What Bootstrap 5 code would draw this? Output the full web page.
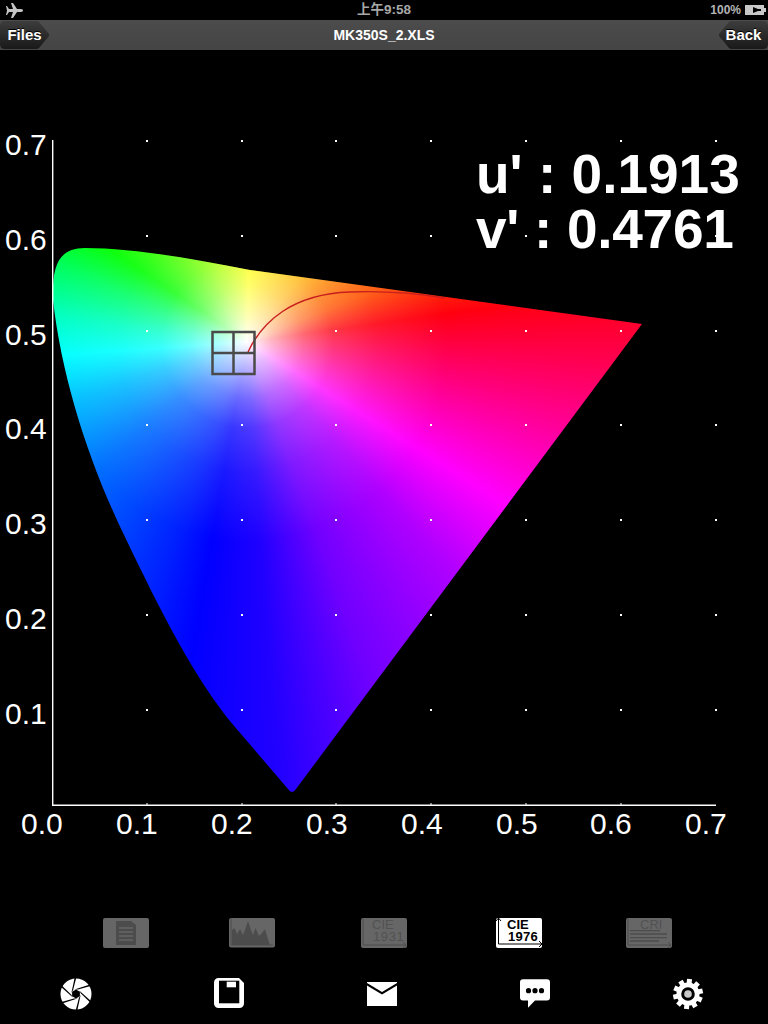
<!DOCTYPE html>
<html lang="zh">
<head>
<meta charset="utf-8">
<title>MK350S_2.XLS</title>
<link href="https://cdn.jsdelivr.net/npm/bootstrap@5.3.0/dist/css/bootstrap.min.css" rel="stylesheet">
<style>
html,body{background:#000;height:100%;margin:0}
body{width:768px;height:1024px;overflow:hidden;font-family:"Liberation Sans",Arial,sans-serif}
.stat-bar{height:20px;padding:0 2px;color:#b4b4b4;font-size:12px}
.stat-side{width:120px}
.plane-side{padding-left:4px}
.stat-time{font-family:"Liberation Sans","Noto Sans CJK SC",sans-serif;font-size:13.5px;font-weight:700;color:#a8a8a8}
.title-bar{height:30px;background:linear-gradient(#4c4c4c,#444);color:#fff;font-weight:700;font-size:14px}
.nav-shape{height:30px;width:49px;font-size:15px;font-weight:700;color:#fff;background:linear-gradient(#3e3e3e,#181818);border:0;padding:0;text-shadow:0 -1px 0 #000}
.nav-left{clip-path:path("M0 6Q0 1 5 1H36Q38 1 39 2L49 14Q50 15 49 16L39 28Q38 29 36 29H5Q0 29 0 24Z")}
.nav-right{clip-path:path("M49 6Q49 1 44 1H13Q11 1 10 2L0 14Q-1 15 0 16L10 28Q11 29 13 29H44Q49 29 49 24Z")}
.chart-area{height:868px;position:relative}
.chromo{position:absolute;left:0;top:-50px;width:768px;height:898px;
 clip-path:path("M53 300 C52 268 57 248 85 248 C130 248 190 258 250 270 L642 324 L296 789 C293 793 291 793 288 789 L235 727 C195 680 160 610 125 537 C90 465 62 380 53 300 Z");
 background:
  radial-gradient(circle 200px at 247px 342px,rgba(255,255,255,1) 0,rgba(255,255,255,.72) 12%,rgba(255,255,255,.42) 28%,rgba(255,255,255,.22) 43%,rgba(255,255,255,.1) 65%,rgba(255,255,255,0) 100%),
  conic-gradient(from 0deg at 247px 342px,#ff0 2deg,#ffb000 40deg,#ff5000 68deg,#ff0010 82deg,#ff0080 101deg,#f0f 122deg,#b000ff 138deg,#7000ff 160deg,#2000ff 176deg,#00f 190deg,#0020ff 200deg,#0070ff 230deg,#00c0ff 252deg,#0ff 266deg,#00ffc0 278deg,#00ff60 292deg,#0f0 304deg,#a0ff00 338deg,#ff0 362deg)}
.chart-svg{position:absolute;left:0;top:-50px;width:768px;height:898px}
.ax-label{font-family:"Liberation Sans",Arial,sans-serif;font-size:30px;fill:#fff}
.uv-label{font-family:"Liberation Sans",Arial,sans-serif;font-size:55px;font-weight:700;fill:#fff}
.mode-row{height:31px;padding-left:103px}
.mode-ic{width:46px;height:31px;display:block}
.gap-a{margin-left:80px}.gap-b{margin-left:86px}.gap-c{margin-left:89px}.gap-d{margin-left:84px}
.act-row{margin-top:29px;height:32px;padding-left:60px}
.act-ic{width:32px;height:32px;display:block}
.act-a,.act-b,.act-c,.act-d{margin-left:121px}
.lbl-gray{font-family:"Liberation Sans",Arial,sans-serif;fill:#525252;font-size:13px}
.lbl-white{font-family:"Liberation Sans",Arial,sans-serif;font-weight:700;fill:#000;font-size:13px}
</style>
</head>
<body>
<div class="stat-bar d-flex align-items-center justify-content-between">
  <div class="stat-side plane-side d-flex align-items-center">
    <svg width="17" height="15" viewBox="0 0 17 15"><path fill="#c4c4c4" d="M1 3 3 6H7L5 0H7L11 6H15C16.500 6 17 7 17 7.500 17 8 16.500 9 15 9H11L7 15H5L7 9H3L1 12H0L1 7.500 0 3Z"/></svg>
  </div>
  <div class="stat-time">上午9:58</div>
  <div class="stat-side d-flex align-items-center justify-content-end gap-1">
    <span class="fw-bold">100%</span>
    <svg width="21" height="10" viewBox="0 0 21 10"><path fill="#c8c8c8" d="M0 0h19v3h2v4h-2v3H0z"/><path fill="#000" d="M8 2 13 4h3v2h-3l-5 2z"/></svg>
  </div>
</div>
<div class="title-bar d-flex align-items-center justify-content-between">
  <button class="nav-shape nav-left">Files</button>
  <div>MK350S_2.XLS</div>
  <button class="nav-shape nav-right">Back</button>
</div>
<div class="chart-area">
  <div class="chromo"></div>
  <svg class="chart-svg" viewBox="0 0 768 898">
    <g fill="#fff">
      <path d="M52 140h1.4v664.6H716v1.4H52z"/>
      <g id="dots"></g>
    </g>
    <path fill="none" stroke="#c81e1e" stroke-width="1.4" d="M248 352 C262 322 292 294 350 292 C385 290.500 420 294 445 298"/>
    <g fill="none" stroke="#4a4a4a" stroke-width="2.500">
      <rect x="212.500" y="332" width="42" height="42"/>
      <path d="M233.500 332v42M212.500 353h42"/>
    </g>
    <g class="ax-label">
      <text x="5" y="155">0.7</text><text x="5" y="250">0.6</text><text x="5" y="345">0.5</text><text x="5" y="439">0.4</text><text x="5" y="534">0.3</text><text x="5" y="629">0.2</text><text x="5" y="724">0.1</text>
      <text x="21" y="834">0.0</text><text x="116" y="834">0.1</text><text x="211" y="834">0.2</text><text x="306" y="834">0.3</text><text x="401" y="834">0.4</text><text x="496" y="834">0.5</text><text x="590" y="834">0.6</text><text x="685" y="834">0.7</text>
    </g>
    <text class="uv-label" x="476" y="193">u' : 0.1913</text>
    <text class="uv-label" x="476" y="248" letter-spacing="-.3">v' : 0.4761</text>
  </svg>
</div>
<div class="mode-row d-flex align-items-start">
  <svg class="mode-ic" viewBox="0 0 46 31"><rect width="46" height="30" rx="2" fill="#666"/><path fill="#4c4c4c" d="M13 3h15l5 4v20H13z"/><path stroke="#666" stroke-width="1.300" d="M16 10h14M16 14h14M16 18h14M16 22h14"/></svg>
  <svg class="mode-ic gap-a" viewBox="0 0 46 31"><rect width="46" height="29.500" rx="2" fill="#666"/><path fill="#4c4c4c" d="M3 12 5.500 10 8 16 11 11 14 17 16 12 19 3 22 12 24 17 26.500 10 30 18 33 15 36 11 38 18 41 27H3z"/><path fill="none" stroke="#4c4c4c" d="M2 0v27h42"/></svg>
  <svg class="mode-ic gap-b" viewBox="0 0 46 31"><rect width="46" height="30" rx="2" fill="#666"/><path fill="none" stroke="#4c4c4c" d="M2 1v26h42M42 24l3 3-3 3"/><text class="lbl-gray" x="11" y="10.500">CIE</text><text class="lbl-gray" x="12" y="22.700" letter-spacing=".6">1931</text></svg>
  <svg class="mode-ic gap-c" viewBox="0 0 46 31"><rect width="46" height="30" rx="2" fill="#fff"/><path fill="none" stroke="#000" stroke-width="1" d="M2.500 0v26H46M0 3l2.500-3L5 3M43 23l3 3-3 3"/><text class="lbl-white" x="11" y="10.500">CIE</text><text class="lbl-white" x="12" y="22.700" letter-spacing=".3">1976</text></svg>
  <svg class="mode-ic gap-d" viewBox="0 0 46 31"><rect width="46" height="30" rx="2" fill="#666"/><path stroke="#4c4c4c" stroke-width="1.300" d="M4 12.700h30M4 16h37M4 19.700h37M4 23h29"/><path fill="none" stroke="#4c4c4c" d="M2 1v26h42M42 24l3 3-3 3"/><text class="lbl-gray" x="14" y="10.500">CRI</text></svg>
</div>
<div class="act-row d-flex align-items-start">
  <svg class="act-ic" viewBox="0 0 32 32"><circle cx="16" cy="16" r="15.500" fill="#fff"/><g id="blades"></g><path d="M16 11.500 19.900 13.750V18.250L16 20.500 12.100 18.250V13.750Z"/></svg>
  <svg class="act-ic act-a" viewBox="0 0 32 32"><path fill="#fff" d="M5.500 0H26L31 5V25.500A4.500 4.500 0 0 1 26.500 30H5.500A4.500 4.500 0 0 1 1 25.500V4.500A4.500 4.500 0 0 1 5.500 0Z"/><path d="M6 2.700H26.300V25.300H6Z"/><rect x="13.700" y="3.700" width="9.300" height="5.600" fill="#fff"/></svg>
  <svg class="act-ic act-b" viewBox="0 0 32 32"><path fill="#fff" d="M1 4v1l15 9 15-9V4zM1 7.500V28h30V7.500L16 16.500z"/></svg>
  <svg class="act-ic act-c" viewBox="0 0 32 32"><path fill="#fff" d="M4 1.300h24a3 3 0 0 1 3 3v15.200a3 3 0 0 1-3 3H16L9 29.700v-7.200H4a3 3 0 0 1-3-3V4.300a3 3 0 0 1 3-3z"/><circle cx="9.500" cy="12.700" r="2.600"/><circle cx="16" cy="12.700" r="2.600"/><circle cx="22.500" cy="12.700" r="2.600"/></svg>
  <svg class="act-ic act-d" viewBox="0 0 32 32"><g fill="#fff"><circle cx="16" cy="16" r="11.500"/><g id="teeth"></g></g><circle cx="16" cy="16" r="5.300" fill="#c8c8c8" stroke="#000" stroke-width="3"/></svg>
</div>
<script src="https://cdn.jsdelivr.net/npm/bootstrap@5.3.0/dist/js/bootstrap.bundle.min.js"></script>
<script>
let s='';
for(const x of [147,242,336,431,526,621,716])for(const y of [141,236,331,425,520,615,710])s+=`<rect x="${x-1}" y="${y-1}" width="2" height="2"/>`;
for(const x of [147,242,336,431,526,621])s+=`<rect x="${x-.5}" y="803" width="1" height="3"/>`;
document.getElementById('dots').innerHTML=s;
let b='',t='';
for(let i=0;i<6;i++)b+=`<path d="M14.500 11.500 18 11.500 30.500 8 30 6.500Z" transform="rotate(${i*60} 16 16)"/>`;
document.getElementById('blades').innerHTML=b;
for(let i=0;i<10;i++)t+=`<rect x="13.500" y="1" width="5" height="6" transform="rotate(${i*36+6} 16 16)"/>`;
document.getElementById('teeth').innerHTML=t;
</script>
</body>
</html>
